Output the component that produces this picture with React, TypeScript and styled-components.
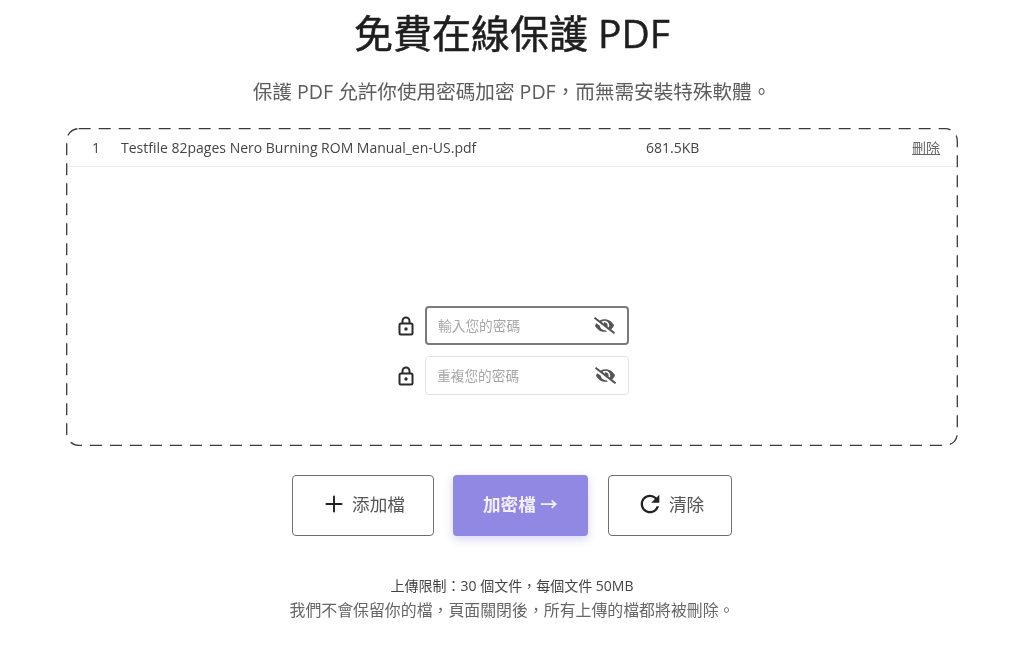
import React from 'react';
import styled, { createGlobalStyle } from 'styled-components';
import { FaEyeSlash } from 'react-icons/fa';
import { MdRefresh } from 'react-icons/md';
import { Plus } from 'lucide-react';

const GlobalStyle = createGlobalStyle`
  html, body {
    margin: 0;
    padding: 0;
    background: #fff;
    font-family: "Open Sans", "Noto Sans CJK TC", sans-serif;
  }
`;

const Page = styled.main`
  width: 1024px;
  height: 651px;
  overflow: hidden;
  display: flex;
  flex-direction: column;
  align-items: center;
  filter: blur(0.3px);
`;

const Title = styled.h1`
  margin: 8px 0 0;
  height: 50px;
  font-size: 39px;
  line-height: 50px;
  font-weight: 400;
  -webkit-text-stroke: 0.5px #1f1f1f;
  color: #1f1f1f;
`;

const Subtitle = styled.p`
  margin: 22px 0 0;
  height: 24px;
  font-size: 19.6px;
  line-height: 24px;
  color: #5c5c5c;
`;

const DropZone = styled.section`
  position: relative;
  box-sizing: border-box;
  width: 892px;
  height: 318px;
  margin-top: 24px;
  display: flex;
  flex-direction: column;
`;

const DashedOutline = styled.svg`
  position: absolute;
  inset: 0;
  width: 100%;
  height: 100%;
  pointer-events: none;
`;

const FileRow = styled.div`
  height: 38px;
  padding: 0 18px 0 26px;
  display: flex;
  align-items: center;
  border-bottom: 1px solid #ececec;
  font-size: 14px;
  color: #444;
`;

const FileIndex = styled.span`
  width: 29px;
`;

const FileName = styled.span`
  width: 525px;
`;

const FileSize = styled.span`
  flex: 1;
`;

const RemoveLink = styled.a`
  color: #666;
  text-decoration: underline;
  font-size: 14px;
`;

const PasswordForm = styled.div`
  margin-top: 139px;
  display: flex;
  flex-direction: column;
  align-items: center;
  gap: 11px;
`;

const PasswordRow = styled.div`
  display: flex;
  align-items: center;
  gap: 11px;
  margin-left: 3px;
`;

const LockIcon = styled.svg`
  width: 16px;
  height: 20px;
  color: #2b2b2b;
`;

const PasswordField = styled.div<{ $focused?: boolean }>`
  box-sizing: border-box;
  width: 204px;
  height: 39px;
  padding: 0 12px 2px 11px;
  display: flex;
  align-items: center;
  justify-content: space-between;
  border-radius: 4px;
  border: ${(p) => (p.$focused ? '2px solid #7b7b7b' : '1px solid #e2e2e2')};
  font-size: 13.7px;
  color: #a6a6a6;
  svg {
    color: #555;
    font-size: 21px;
    margin-top: 2px;
  }
`;

const Actions = styled.div`
  margin-top: 29px;
  display: flex;
  gap: 19px;
`;

const OutlineButton = styled.button<{ $width: number; $pushed?: boolean }>`
  box-sizing: border-box;
  width: ${(p) => p.$width}px;
  height: 61px;
  margin-left: ${(p) => (p.$pushed ? '1px' : '0')};
  padding: 0 0 4px;
  display: flex;
  align-items: center;
  justify-content: center;
  gap: 5px;
  background: #fff;
  border: 1.5px solid #6f6f6f;
  border-radius: 4px;
  font-family: inherit;
  font-size: 17.6px;
  color: #555;
  svg {
    margin-top: 1px;
  }
`;

const PrimaryButton = styled.button`
  box-sizing: border-box;
  width: 135px;
  height: 61px;
  padding: 0 0 4px;
  border: none;
  border-radius: 4px;
  background: #9088e2;
  box-shadow: 0 3px 10px rgba(120, 110, 220, 0.3);
  font-family: inherit;
  font-size: 17.6px;
  font-weight: 600;
  color: #f1effc;
`;

const Limit = styled.p`
  margin: 41px 0 0;
  height: 18px;
  font-size: 14px;
  line-height: 18px;
  color: #444;
`;

const Notice = styled.p`
  margin: 5px 0 0;
  height: 20px;
  font-size: 15.9px;
  line-height: 20px;
  color: #666;
`;

const Lock = () => (
  <LockIcon viewBox="0 0 16 20" fill="none" stroke="currentColor">
    <rect x="1.5" y="7.5" width="13" height="11" rx="1.5" strokeWidth="2" />
    <path d="M4.5 7.5V5a3.5 3.5 0 0 1 7 0v2.5" strokeWidth="2" />
    <circle cx="8" cy="13" r="1.7" fill="currentColor" stroke="none" />
  </LockIcon>
);

const PasswordInput = ({ hint, focused }: { hint: string; focused?: boolean }) => (
  <PasswordRow>
    <Lock />
    <PasswordField $focused={focused}>
      <span>{hint}</span>
      <FaEyeSlash />
    </PasswordField>
  </PasswordRow>
);

const App = () => {
  return (
    <Page lang="zh-Hant">
      <GlobalStyle />
      <Title>免費在線保護 PDF</Title>
      <Subtitle>保護 PDF 允許你使用密碼加密 PDF，而無需安裝特殊軟體。</Subtitle>
      <DropZone>
        <DashedOutline>
          <rect
            x="0.7"
            y="0.7"
            width="890.6"
            height="316.6"
            rx="12"
            fill="none"
            stroke="#3a3a3a"
            strokeWidth="1.3"
            strokeDasharray="12 8"
          />
        </DashedOutline>
        <FileRow>
          <FileIndex>1</FileIndex>
          <FileName>Testfile 82pages Nero Burning ROM Manual_en-US.pdf</FileName>
          <FileSize>681.5KB</FileSize>
          <RemoveLink>刪除</RemoveLink>
        </FileRow>
        <PasswordForm>
          <PasswordInput hint="輸入您的密碼" focused />
          <PasswordInput hint="重複您的密碼" />
        </PasswordForm>
      </DropZone>
      <Actions>
        <OutlineButton $width={142}>
          <Plus size={26} strokeWidth={1.8} color="#222" />
          添加檔
        </OutlineButton>
        <PrimaryButton>加密檔 →</PrimaryButton>
        <OutlineButton $width={124} $pushed>
          <MdRefresh size={28} color="#222" />
          清除
        </OutlineButton>
      </Actions>
      <Limit>上傳限制：30 個文件，每個文件 50MB</Limit>
      <Notice>我們不會保留你的檔，頁面關閉後，所有上傳的檔都將被刪除。</Notice>
    </Page>
  );
};

export default App;
